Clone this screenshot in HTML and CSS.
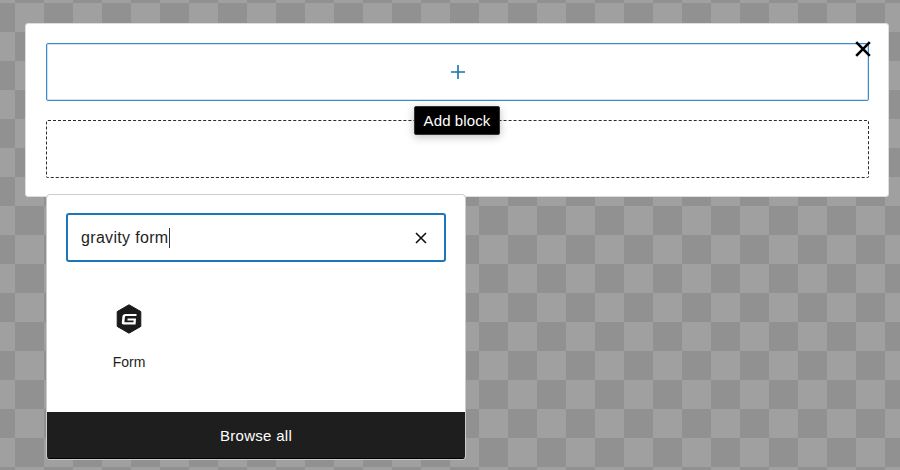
FILE: index.html
```html
<!DOCTYPE html>
<html lang="en">
<head>
<meta charset="utf-8">
<title>Add block</title>
<link rel="stylesheet" href="styles.css">
</head>
<body>
<main class="stage">
  <section class="card">
    <button class="close" aria-label="Close">
      <svg viewBox="0 0 24 24" width="24" height="24"><path d="M5.2 5.2 18.8 18.8M18.8 5.2 5.2 18.8"/></svg>
    </button>
    <div class="slot slot-active">
      <svg class="plus" viewBox="0 0 24 24" width="24" height="24"><path d="M12 5v14M5 12h14"/></svg>
    </div>
    <div class="slot slot-dashed"></div>
    <div class="tooltip">Add block</div>
  </section>
  <section class="inserter">
    <div class="search-wrap">
      <div class="search">
        <span class="query">gravity form</span><span class="caret"></span>
        <svg class="clear" viewBox="0 0 24 24" width="24" height="24"><path d="M7 7l10 10M17 7 7 17"/></svg>
      </div>
    </div>
    <div class="results">
      <div class="block-item">
        <svg class="gf" viewBox="0 0 28 30" width="28" height="30">
          <path class="hex" d="M14 0.8 25.8 7.6V22.4L14 29.2 2.2 22.4V7.6Z"/>
          <path class="g" d="M21.6 10H10.4C8.6 10 7.6 11 7.4 12.6L6.8 18.4C6.6 19.6 7.4 20.4 8.6 20.4H20.6L21 14.4H12.6L12.4 16.4H18.6L18.5 18.2H9.4L9.9 13.2C10 12.4 10.4 12 11.2 12H21.4Z"/>
        </svg>
        <span class="block-label">Form</span>
      </div>
    </div>
    <button class="browse">Browse all</button>
  </section>
</main>
</body>
</html>
```
FILE: styles.css
```css
* { box-sizing: border-box; }
html, body { margin: 0; height: 100%; }
body {
  font-family: "Liberation Sans", Arial, sans-serif;
  overflow: hidden;
  background-color: #a0a0a0;
  background-image: repeating-conic-gradient(#919191 0 25%, #a0a0a0 0 50%);
  background-size: 58px 58px;
  background-position: 15px 3px;
}
.stage { position: relative; width: 900px; height: 470px; padding: 23px 11px 0 25px; }
.card {
  position: relative;
  height: 174px;
  padding: 19px 19px 19px 20px;
  background: #fff;
  border: 1px solid #ddd;
  border-radius: 3px;
  display: flex;
  flex-direction: column;
  gap: 19px;
}
.slot { height: 58px; flex: none; border-radius: 2px; display: flex; align-items: center; justify-content: center; }
.slot-active { border: 1px solid #3f8ac8; box-shadow: inset 0 0 0 1px rgba(63,138,200,.25); }
.slot-dashed { border: 1px dashed #2a2a2a; }
.plus { fill: none; stroke: #1a6fb0; stroke-width: 1.6; }
.close {
  position: absolute; top: 13px; right: 13px;
  width: 24px; height: 24px; padding: 0; border: 0; background: none;
}
.close svg { display: block; fill: none; stroke: #000; stroke-width: 2.6; }
.tooltip {
  position: absolute; left: 388px; top: 82px;
  width: 86px; height: 29px;
  background: #000; color: #fff;
  border: 1px solid #333; border-radius: 2px;
  box-shadow: 0 2px 8px rgba(0,0,0,.25);
  font-size: 15px; letter-spacing: .1px;
  display: flex; align-items: center; justify-content: center;
}
.inserter {
  position: absolute; left: 46px; top: 194px;
  width: 420px; height: 266px;
  background: #fff;
  border: 1px solid #ccc;
  border-radius: 4px;
  display: flex; flex-direction: column;
  overflow: hidden;
}
.search-wrap { padding: 18px 19px 0; }
.search {
  height: 49px; padding: 0 11px 0 13px;
  border: 2px solid #1e76b8; border-radius: 3px;
  display: flex; align-items: center;
  font-size: 16px; color: #1e1e1e;
}
.query { letter-spacing: .33px; }
.caret { width: 1px; height: 20px; background: #333; }
.clear { margin-left: auto; fill: none; stroke: #111; stroke-width: 1.6; }
.results { flex: 1; padding: 42px 0 0 32px; }
.block-item { width: 100px; display: flex; flex-direction: column; align-items: center; gap: 20px; }
.gf { display: block; }
.hex { fill: #1a1a1a; stroke: #1a1a1a; stroke-width: 1; stroke-linejoin: round; }
.g { fill: #fff; }
.block-label { font-size: 14px; color: #1e1e1e; }
.browse {
  height: 47px; flex: none; width: 100%;
  border: 0; background: #1e1e1e; color: #fff;
  font: 15px "Liberation Sans", Arial, sans-serif; letter-spacing: .3px;
  border-bottom: 1px solid #000;
}
```
